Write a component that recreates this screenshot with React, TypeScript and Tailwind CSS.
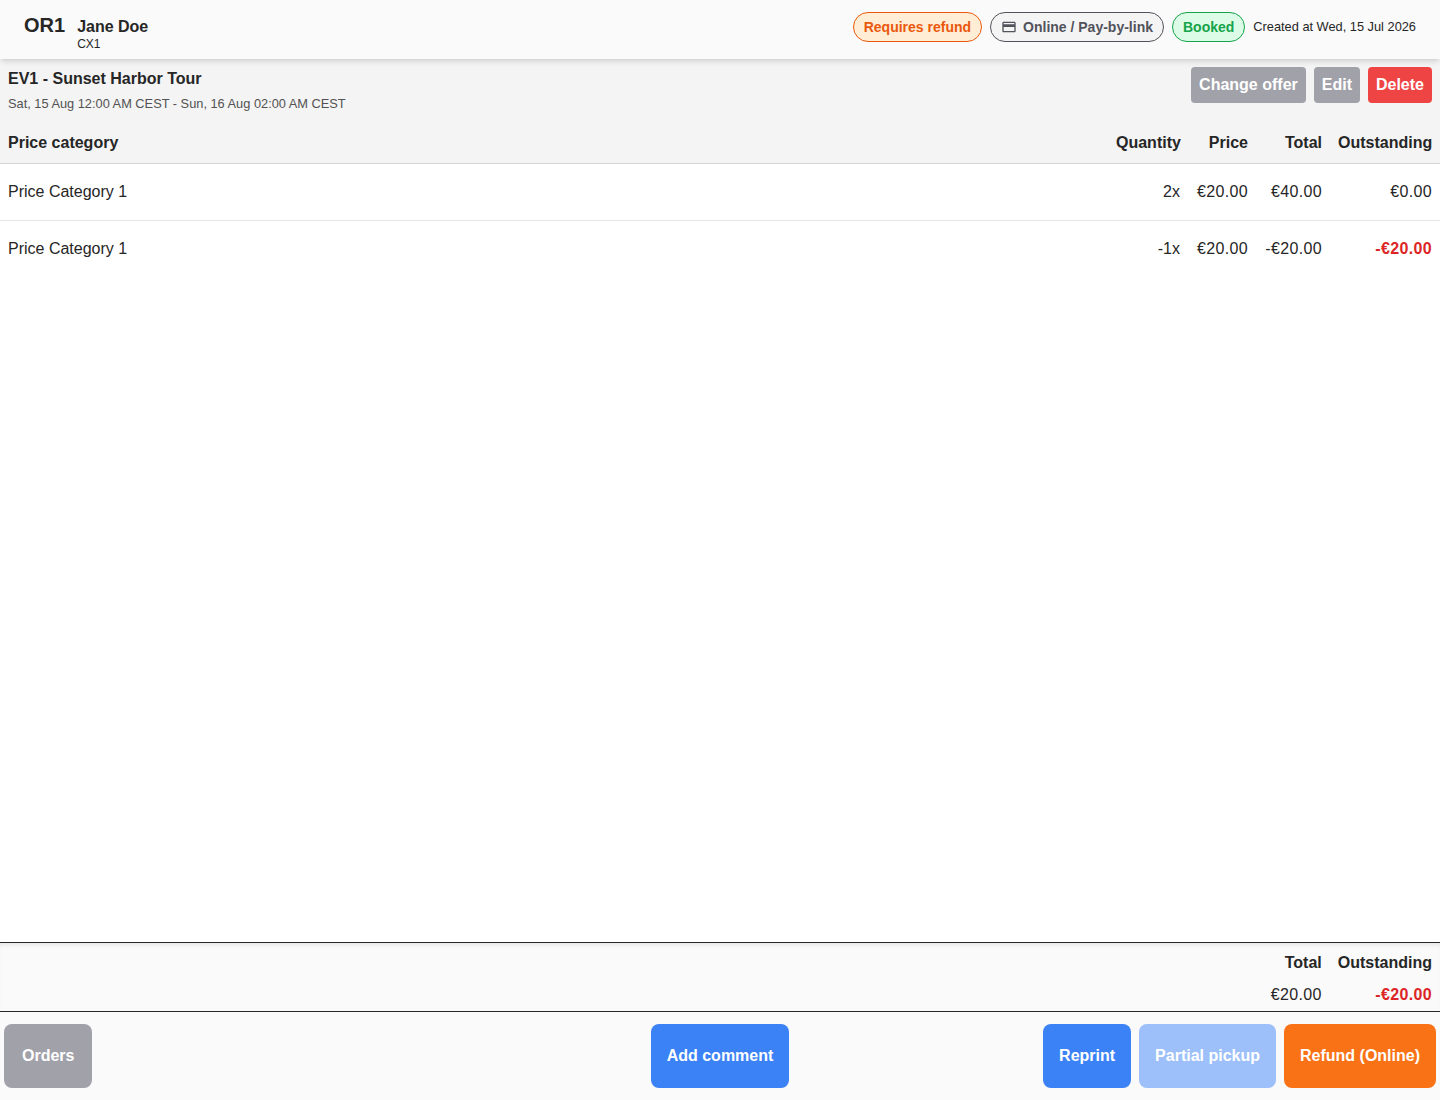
import React from "react";

type Line = {
  name: string;
  quantity: string;
  price: string;
  total: string;
  outstanding: string;
  negative?: boolean;
};

const lines: Line[] = [
  { name: "Price Category 1", quantity: "2x", price: "€20.00", total: "€40.00", outstanding: "€0.00" },
  { name: "Price Category 1", quantity: "-1x", price: "€20.00", total: "-€20.00", outstanding: "-€20.00", negative: true },
];

const CardIcon = () => (
  <svg width="16" height="16" viewBox="0 0 24 24" fill="currentColor" className="shrink-0">
    <path d="M20 4H4c-1.11 0-1.99.89-1.99 2L2 18c0 1.11.89 2 2 2h16c1.11 0 2-.89 2-2V6c0-1.11-.89-2-2-2zm0 14H4v-6h16v6zm0-10H4V6h16v2z" />
  </svg>
);

const App: React.FC = () => {
  return (
    <div className="flex flex-col h-[1100px] bg-white text-[#262626] font-['Liberation_Sans',Arial,sans-serif]">
      {/* header */}
      <div className="flex flex-row items-start justify-between h-[59px] shrink-0 pt-3 px-6 bg-[#fafafa] shadow-md relative z-10">
        <div className="flex flex-row items-start gap-3">
          <span className="text-xl font-bold leading-[26px]">OR1</span>
          <div className="flex flex-col pt-[5px]">
            <span className="text-base font-bold leading-[20px]">Jane Doe</span>
            <span className="text-xs leading-[15px]">CX1</span>
          </div>
        </div>
        <div className="flex flex-row items-center gap-2">
          <span className="flex items-center h-[30px] px-2.5 rounded-full border border-[#ea580c] bg-[#ffedd5] text-[#ea580c] text-sm font-bold">
            Requires refund
          </span>
          <span className="flex items-center gap-1.5 h-[30px] px-2.5 rounded-full border border-[#52525b] bg-[#f4f4f5] text-[#52525b] text-sm font-bold">
            <CardIcon />
            Online / Pay-by-link
          </span>
          <span className="flex items-center h-[30px] px-2.5 rounded-full border border-[#16a34a] bg-[#dcfce7] text-[#16a34a] text-sm font-bold">
            Booked
          </span>
          <span className="text-[12.8px]">Created at Wed, 15 Jul 2026</span>
        </div>
      </div>

      {/* offer */}
      <div className="flex flex-row justify-between h-[61px] shrink-0 pt-2 px-2 bg-[#f4f4f4]">
        <div className="flex flex-col">
          <span className="text-base font-bold leading-[22px] pt-px">EV1 - Sunset Harbor Tour</span>
          <span className="text-[12.8px] text-[#525252] mt-[6px] leading-[16px]">
            Sat, 15 Aug 12:00 AM CEST - Sun, 16 Aug 02:00 AM CEST
          </span>
        </div>
        <div className="flex flex-row gap-2 h-9">
          <button className="px-2 rounded bg-[#a1a1aa] text-white font-bold">Change offer</button>
          <button className="px-2 rounded bg-[#a1a1aa] text-white font-bold">Edit</button>
          <button className="px-2 rounded bg-[#ef4444] text-white font-bold">Delete</button>
        </div>
      </div>

      {/* lines */}
      <div className="flex-1">
        <table className="w-full table-fixed border-collapse">
          <thead>
            <tr className="h-[43px] bg-[#f4f4f4] border-b border-[#d4d4d4]">
              <th className="px-2 pt-[3px] text-left font-bold">Price category</th>
              <th className="w-[80px] px-2 pt-[3px] text-right font-bold">Quantity</th>
              <th className="w-[68px] px-2 pt-[3px] text-right font-bold">Price</th>
              <th className="w-[74px] px-2 pt-[3px] text-right font-bold">Total</th>
              <th className="w-[110px] px-2 pt-[3px] text-right font-bold">Outstanding</th>
            </tr>
          </thead>
          <tbody>
            {lines.map((line, i) => (
              <tr key={i} className="h-[57px] border-b border-[#e5e5e5] last:border-b-0">
                <td className="px-2">{line.name}</td>
                <td className="px-2 text-right">{line.quantity}</td>
                <td className="px-2 text-right tracking-[0.35px]">{line.price}</td>
                <td className="px-2 text-right tracking-[0.35px] whitespace-nowrap">{line.total}</td>
                <td
                  className={
                    line.negative
                      ? "px-2 text-right tracking-[0.35px] font-bold text-[#dc2626]"
                      : "px-2 text-right tracking-[0.35px]"
                  }
                >
                  {line.outstanding}
                </td>
              </tr>
            ))}
          </tbody>
        </table>
      </div>

      {/* totals */}
      <div className="flex flex-row justify-end gap-4 h-[70px] shrink-0 px-2 pt-[9px] bg-[#fafafa] border-y border-[#262626] shadow-[inset_0_5px_6px_-4px_rgba(0,0,0,0.12)]">
        <div className="flex flex-col items-end gap-[10px]">
          <span className="font-bold leading-[22px]">Total</span>
          <span className="leading-[22px] tracking-[0.35px]">€20.00</span>
        </div>
        <div className="flex flex-col items-end gap-[10px]">
          <span className="font-bold leading-[22px]">Outstanding</span>
          <span className="font-bold text-[#dc2626] leading-[22px] tracking-[0.35px]">-€20.00</span>
        </div>
      </div>

      {/* actions */}
      <div className="grid grid-cols-3 items-center h-[88px] shrink-0 px-1 bg-[#fafafa]">
        <div className="flex flex-row">
          <button className="h-16 px-[18px] rounded-lg bg-[#a1a1aa] text-white font-bold">Orders</button>
        </div>
        <div className="flex flex-row justify-center">
          <button className="h-16 px-4 rounded-lg bg-[#3b82f6] text-white font-bold">Add comment</button>
        </div>
        <div className="flex flex-row justify-end gap-2">
          <button className="h-16 px-4 rounded-lg bg-[#3b82f6] text-white font-bold">Reprint</button>
          <button className="h-16 px-4 rounded-lg bg-[#9dc0fa] text-white font-bold">Partial pickup</button>
          <button className="h-16 px-4 rounded-lg bg-[#f97316] text-white font-bold">Refund (Online)</button>
        </div>
      </div>
    </div>
  );
};

export default App;
